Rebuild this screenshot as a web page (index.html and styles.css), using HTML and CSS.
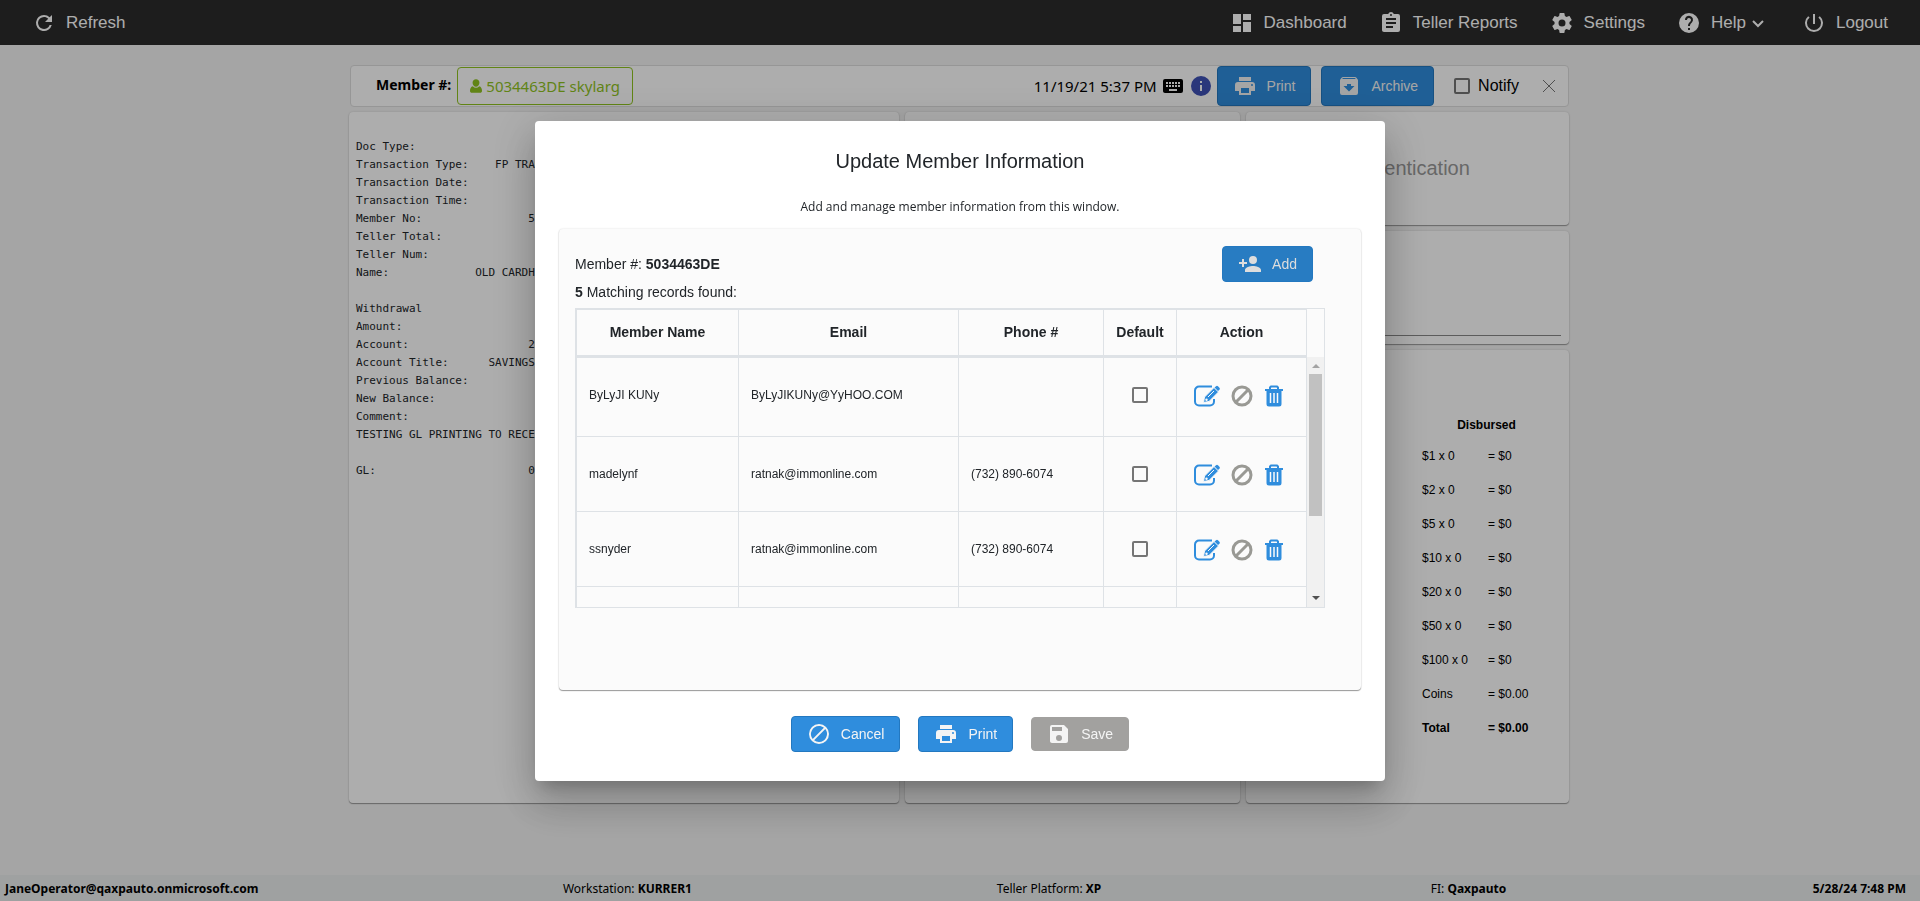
FILE: index.html
```html
<!DOCTYPE html>
<html lang="en">
<head>
    <meta charset="UTF-8">
    <meta name="viewport" content="width=device-width, initial-scale=1.0">
    <title>Update Member Information</title>
    <link rel="stylesheet" href="styles.css">
</head>
<body>

    <!-- Shared icons -->
    <svg class="sprite" aria-hidden="true">
        <symbol id="i-refresh" viewBox="0 0 24 24"><path d="M17.65 6.35A7.96 7.96 0 0 0 12 4a8 8 0 1 0 7.73 10h-2.08A6 6 0 1 1 12 6c1.66 0 3.14.69 4.22 1.78L13 11h7V4z"/></symbol>
        <symbol id="i-dashboard" viewBox="0 0 24 24"><path d="M3 13h8V3H3zm0 8h8v-6H3zm10 0h8V11h-8zm0-18v6h8V3z"/></symbol>
        <symbol id="i-report" viewBox="0 0 24 24"><path d="M19 3h-4.18a3 3 0 0 0-5.64 0H5a2 2 0 0 0-2 2v14c0 1.100.9 2 2 2h14a2 2 0 0 0 2-2V5a2 2 0 0 0-2-2zm-7 0a1 1 0 1 1 0 2 1 1 0 0 1 0-2zm2 14H7v-2h7zm3-4H7v-2h10zm0-4H7V7h10z"/></symbol>
        <symbol id="i-settings" viewBox="0 0 24 24"><path d="M19.43 12.980a7.800 7.800 0 0 0 0-1.960l2.110-1.650a.5.5 0 0 0 .12-.64l-2-3.460a.5.5 0 0 0-.61-.22l-2.490 1a7.300 7.300 0 0 0-1.690-.98l-.38-2.650A.49.49 0 0 0 14 2h-4a.49.49 0 0 0-.49.42l-.38 2.650c-.61.25-1.170.59-1.690.98l-2.490-1a.49.49 0 0 0-.61.22l-2 3.460a.49.49 0 0 0 .12.64l2.110 1.650a7.900 7.900 0 0 0 0 1.960l-2.110 1.650a.5.5 0 0 0-.12.64l2 3.460c.12.22.39.3.61.22l2.490-1c.52.4 1.080.73 1.690.98l.38 2.650c.03.24.24.42.49.42h4c.25 0 .46-.18.49-.42l.38-2.650a7.700 7.700 0 0 0 1.690-.98l2.490 1c.23.09.49 0 .61-.22l2-3.460a.5.5 0 0 0-.12-.64zM12 15.500a3.500 3.500 0 1 1 0-7 3.500 3.500 0 0 1 0 7z"/></symbol>
        <symbol id="i-help" viewBox="0 0 24 24"><path d="M12 2a10 10 0 1 0 0 20 10 10 0 0 0 0-20zm1 17h-2v-2h2zm2.070-7.750-.9.920C13.450 12.900 13 13.500 13 15h-2v-.5c0-1.100.45-2.100 1.170-2.830l1.240-1.260A2 2 0 1 0 10 9H8a4 4 0 1 1 7.070 2.250z"/></symbol>
        <symbol id="i-power" viewBox="0 0 24 24"><path d="M13 3h-2v10h2zm4.830 2.170-1.420 1.420A7 7 0 1 1 7.580 6.580L6.170 5.170a9 9 0 1 0 11.660 0z"/></symbol>
        <symbol id="i-print" viewBox="0 0 24 24"><path d="M19 8H5a3 3 0 0 0-3 3v6h4v4h12v-4h4v-6a3 3 0 0 0-3-3zm-3 11H8v-5h8zm3-7a1 1 0 1 1 0-2 1 1 0 0 1 0 2zm-1-9H6v4h12z"/></symbol>
        <symbol id="i-archive" viewBox="0 0 24 24"><path d="m20.540 5.230-1.390-1.680A1.450 1.450 0 0 0 18 3H6c-.47 0-.88.21-1.160.55L3.460 5.230C3.170 5.570 3 6.020 3 6.500V19a2 2 0 0 0 2 2h14a2 2 0 0 0 2-2V6.500c0-.48-.17-.93-.46-1.270zM12 17.500 6.500 12H10v-2h4v2h3.500zM5.120 5l.81-1h12l.94 1z"/></symbol>
        <symbol id="i-user" viewBox="0 0 14 16"><path d="M7 0a4 4 0 0 1 4 4.300C11 6.600 9.200 9 7 9S3 6.600 3 4.300A4 4 0 0 1 7 0zM3.300 8.200A5 5 0 0 0 7 10a5 5 0 0 0 3.700-1.800C13 8.700 14 11 14 13.500c0 1.500-.9 2.500-2.300 2.500H2.300C.9 16 0 15 0 13.500c0-2.500 1-4.800 3.300-5.300z"/></symbol>
        <symbol id="i-keyboard" viewBox="0 0 24 24"><path d="M20 5H4a2 2 0 0 0-2 2v10c0 1.100.9 2 2 2h16a2 2 0 0 0 2-2V7a2 2 0 0 0-2-2zm-9 3h2v2h-2zm0 3h2v2h-2zM8 8h2v2H8zm0 3h2v2H8zm-1 2H5v-2h2zm0-3H5V8h2zm9 7H8v-2h8zm0-4h-2v-2h2zm0-3h-2V8h2zm3 3h-2v-2h2zm0-3h-2V8h2z"/></symbol>
        <symbol id="i-info" viewBox="0 0 24 24"><path d="M12 2a10 10 0 1 0 0 20 10 10 0 0 0 0-20zm1 15h-2v-6h2zm0-8h-2V7h2z"/></symbol>
        <symbol id="i-add" viewBox="0 0 24 24"><path d="M15 12a4 4 0 1 0 0-8 4 4 0 0 0 0 8zm-9-2V7H4v3H1v2h3v3h2v-3h3v-2zm9 4c-2.670 0-8 1.340-8 4v2h16v-2c0-2.660-5.330-4-8-4z"/></symbol>
        <symbol id="i-cancel" viewBox="0 0 24 24"><path d="M12 2a10 10 0 1 0 0 20 10 10 0 0 0 0-20zm0 2c1.850 0 3.550.63 4.900 1.690L5.690 16.900A8 8 0 0 1 12 4zm0 16a7.900 7.900 0 0 1-4.900-1.690L18.310 7.100A8 8 0 0 1 12 20z"/></symbol>
        <symbol id="i-save" viewBox="0 0 24 24"><path d="M17 3H5a2 2 0 0 0-2 2v14c0 1.100.9 2 2 2h14a2 2 0 0 0 2-2V7zm-5 16a3 3 0 1 1 0-6 3 3 0 0 1 0 6zm3-10H5V5h10z"/></symbol>
        <symbol id="i-edit" viewBox="0 0 26 22"><path fill="none" stroke="currentColor" stroke-width="2" d="M18 1.500H5a4 4 0 0 0-4 4v11a4 4 0 0 0 4 4h11a4 4 0 0 0 4-4V14"/><path stroke="#fafafa" stroke-width="1" d="m9.500 17.500 1-5.500L20 2.500l4.500 4.500L15 16.500z"/><path d="M22 1.200a1.500 1.500 0 0 1 2 0l1.400 1.500a1.500 1.500 0 0 1 0 2L24 6l-3.400-3.500z"/><path stroke="#fafafa" stroke-width="1" d="m14 12 6-6"/><circle cx="12.500" cy="14.800" r="1.200" fill="#fafafa"/></symbol>
        <symbol id="i-ban" viewBox="0 0 22 22"><path fill="none" stroke="currentColor" stroke-width="3" d="M11 2a9 9 0 1 0 0 18 9 9 0 0 0 0-18zM4.800 17.200 17.200 4.800"/></symbol>
        <symbol id="i-trash" viewBox="0 0 20 22"><path fill="none" stroke="currentColor" stroke-width="2" d="M6 5V2.500L7 1.500h6l1 1V5"/><path d="M1 4h18v2h-1.500v13a2.500 2.500 0 0 1-2.500 2.500H5A2.500 2.500 0 0 1 2.500 19V6H1z"/><path stroke="#fafafa" stroke-width="1.500" d="M6.500 8v10M10 8v10M13.500 8v10"/></symbol>
    </svg>

    <div class="page">
        <nav class="topbar">
            <a href="#"><svg class="icon"><use href="#i-refresh"/></svg>Refresh</a>
            <div class="menu">
                <a href="#"><svg class="icon"><use href="#i-dashboard"/></svg>Dashboard</a>
                <a href="#"><svg class="icon"><use href="#i-report"/></svg>Teller Reports</a>
                <a href="#"><svg class="icon"><use href="#i-settings"/></svg>Settings</a>
                <a href="#"><svg class="icon"><use href="#i-help"/></svg>Help<svg class="chevron" viewBox="0 0 12 8"><path d="m1 1 5 5 5-5"/></svg></a>
                <a href="#"><svg class="icon"><use href="#i-power"/></svg>Logout</a>
            </div>
        </nav>

        <main class="content">
            <div class="toolbar">
                <strong>Member #:</strong>
                <button class="chip"><svg><use href="#i-user"/></svg>5034463DE skylarg</button>
                <div class="tools">
                    <span class="date">11/19/21 5:37 PM</span>
                    <svg class="small-icon"><use href="#i-keyboard"/></svg>
                    <svg class="small-icon info"><use href="#i-info"/></svg>
                    <button class="btn tall"><svg class="icon"><use href="#i-print"/></svg>Print</button>
                    <button class="btn tall"><svg class="icon"><use href="#i-archive"/></svg>Archive</button>
                    <label class="notify"><input type="checkbox">Notify</label>
                    <button class="close" aria-label="Close"><svg viewBox="0 0 14 14"><path d="m1 1 12 12M13 1 1 13"/></svg></button>
                </div>
            </div>

            <div class="columns">
                <section class="card">
<pre class="receipt">Doc Type:
Transaction Type:    FP TRANSF
Transaction Date:
Transaction Time:
Member No:                5034
Teller Total:
Teller Num:
Name:             OLD CARDHLDR

Withdrawal
Amount:
Account:                  2
Account Title:      SAVINGS
Previous Balance:
New Balance:
Comment:
TESTING GL PRINTING TO RECEIPT

GL:                       0</pre>
                </section>
                <section class="card"></section>
                <div class="side">
                    <section class="card auth">Authentication</section>
                    <section class="card signature"><div class="line"></div></section>
                    <section class="card cash">
                        <table>
                            <thead><tr><th colspan="2">Disbursed</th></tr></thead>
                            <tbody>
                                <tr><td>$1 x 0</td><td>= $0</td></tr>
                                <tr><td>$2 x 0</td><td>= $0</td></tr>
                                <tr><td>$5 x 0</td><td>= $0</td></tr>
                                <tr><td>$10 x 0</td><td>= $0</td></tr>
                                <tr><td>$20 x 0</td><td>= $0</td></tr>
                                <tr><td>$50 x 0</td><td>= $0</td></tr>
                                <tr><td>$100 x 0</td><td>= $0</td></tr>
                                <tr><td>Coins</td><td>= $0.00</td></tr>
                                <tr class="total"><td>Total</td><td>= $0.00</td></tr>
                            </tbody>
                        </table>
                    </section>
                </div>
            </div>
        </main>

        <footer class="statusbar">
            <strong>JaneOperator@qaxpauto.onmicrosoft.com</strong>
            <span>Workstation: <strong>KURRER1</strong></span>
            <span>Teller Platform: <strong>XP</strong></span>
            <span>FI: <strong>Qaxpauto</strong></span>
            <strong>5/28/24 7:48 PM</strong>
        </footer>
    </div>

    <!-- Member dialog -->
    <div class="backdrop">
        <div class="dialog" role="dialog" aria-labelledby="dialogTitle">
            <h2 id="dialogTitle">Update Member Information</h2>
            <p class="subtitle">Add and manage member information from this window.</p>

            <div class="panel">
                <div class="panel-head">
                    <div>
                        <p>Member #: <strong>5034463DE</strong></p>
                        <p><strong>5</strong> Matching records found:</p>
                    </div>
                    <button class="btn add"><svg class="icon"><use href="#i-add"/></svg>Add</button>
                </div>

                <div class="grid">
                    <div class="grid-rows">
                        <table class="members">
                            <colgroup><col class="c-name"><col class="c-email"><col class="c-phone"><col class="c-default"><col class="c-action"></colgroup>
                            <thead>
                                <tr><th>Member Name</th><th>Email</th><th>Phone #</th><th>Default</th><th>Action</th></tr>
                            </thead>
                            <tbody>
                                <tr class="first">
                                    <td>ByLyJI KUNy</td><td>ByLyJIKUNy@YyHOO.COM</td><td></td>
                                    <td class="center"><input type="checkbox" aria-label="Default"></td>
                                    <td><div class="actions">
                                        <button aria-label="Edit"><svg class="edit"><use href="#i-edit"/></svg></button>
                                        <button aria-label="Block"><svg class="ban"><use href="#i-ban"/></svg></button>
                                        <button aria-label="Delete"><svg class="trash"><use href="#i-trash"/></svg></button>
                                    </div></td>
                                </tr>
                                <tr>
                                    <td>madelynf</td><td>ratnak@immonline.com</td><td>(732) 890-6074</td>
                                    <td class="center"><input type="checkbox" aria-label="Default"></td>
                                    <td><div class="actions">
                                        <button aria-label="Edit"><svg class="edit"><use href="#i-edit"/></svg></button>
                                        <button aria-label="Block"><svg class="ban"><use href="#i-ban"/></svg></button>
                                        <button aria-label="Delete"><svg class="trash"><use href="#i-trash"/></svg></button>
                                    </div></td>
                                </tr>
                                <tr>
                                    <td>ssnyder</td><td>ratnak@immonline.com</td><td>(732) 890-6074</td>
                                    <td class="center"><input type="checkbox" aria-label="Default"></td>
                                    <td><div class="actions">
                                        <button aria-label="Edit"><svg class="edit"><use href="#i-edit"/></svg></button>
                                        <button aria-label="Block"><svg class="ban"><use href="#i-ban"/></svg></button>
                                        <button aria-label="Delete"><svg class="trash"><use href="#i-trash"/></svg></button>
                                    </div></td>
                                </tr>
                                <tr><td></td><td></td><td></td><td></td><td></td></tr>
                            </tbody>
                        </table>
                    </div>
                    <div class="scrollbar">
                        <span class="arrow up"></span>
                        <span class="thumb"></span>
                        <span class="arrow down"></span>
                    </div>
                </div>
            </div>

            <div class="dialog-buttons">
                <button class="btn"><svg class="icon"><use href="#i-cancel"/></svg>Cancel</button>
                <button class="btn"><svg class="icon"><use href="#i-print"/></svg>Print</button>
                <button class="btn save" disabled><svg class="icon"><use href="#i-save"/></svg>Save</button>
            </div>
        </div>
    </div>

</body>
</html>
```
FILE: styles.css
```css
* {
    box-sizing: border-box;
}

body {
    margin: 0;
    font-family: "Liberation Sans", Arial, sans-serif;
    font-size: 14px;
    color: #000;
    background-color: #f3f3f3;
}

button {
    font-family: inherit;
    cursor: pointer;
}

svg {
    fill: currentColor;
    flex: none;
}

.sprite {
    display: none;
}

.icon {
    width: 24px;
    height: 24px;
}

.page {
    display: flex;
    flex-direction: column;
    min-height: 100vh;
}

/* Top bar */
.topbar {
    display: flex;
    justify-content: space-between;
    height: 45px;
    padding: 0 32px;
    background-color: #2c2c2c;
}

.topbar a {
    display: flex;
    align-items: center;
    gap: 10px;
    color: #fff;
    font-size: 17px;
    text-decoration: none;
}

.menu {
    display: flex;
    gap: 32px;
}

.chevron {
    width: 12px;
    height: 8px;
    margin: 2px 6px 0 -4px;
    fill: none;
    stroke: #fff;
    stroke-width: 2;
}

/* Main content */
.content {
    flex: 1;
    width: 1222px;
    max-width: 100%;
    margin: 0 auto;
    padding: 20px 2px 0 0;
}

.toolbar {
    display: flex;
    align-items: center;
    height: 42px;
    margin-left: 1px;
    padding: 0 12px 0 25px;
    background-color: #fff;
    border: 1px solid #ddd;
    border-radius: 4px;
    font-family: "Noto Sans", sans-serif;
    font-size: 15px;
}

.toolbar strong {
    padding-bottom: 4px;
    font-size: 14px;
}

.chip {
    display: flex;
    align-items: center;
    gap: 4px;
    height: 38px;
    margin-left: 6px;
    padding: 0 12px;
    background: none;
    border: 1px solid #8fc31f;
    border-radius: 4px;
    color: #8fc31f;
    font-size: 15px;
}

.chip svg {
    width: 12px;
    height: 14px;
}

.tools {
    display: flex;
    align-items: center;
    margin-left: auto;
}

.small-icon {
    width: 24px;
    height: 24px;
    margin-left: 4px;
}

.info {
    margin-right: 4px;
    color: #3f51b5;
}

.btn {
    display: flex;
    align-items: center;
    gap: 10px;
    height: 36px;
    padding: 0 15px;
    background-color: #2f8ddd;
    border: 1px solid #2378c0;
    border-radius: 4px;
    color: #f4f4f4;
    font-family: "Liberation Sans", Arial, sans-serif;
    font-size: 14px;
}

.btn.tall {
    height: 40px;
    margin-right: 10px;
}

.notify {
    display: flex;
    align-items: center;
    gap: 8px;
    margin: 0 23px 0 10px;
    font-family: "Liberation Sans", Arial, sans-serif;
    font-size: 16px;
}

input[type="checkbox"] {
    appearance: none;
    width: 16px;
    height: 16px;
    margin: 0;
    border: 2px solid #757575;
    border-radius: 2px;
    vertical-align: middle;
}

.close {
    padding: 0;
    background: none;
    border: 0;
}

.close svg {
    display: block;
    width: 14px;
    height: 14px;
    stroke: #757575;
    stroke-width: 1;
}

.columns {
    display: grid;
    grid-template-columns: 550fr 335fr 323fr;
    gap: 6px;
    margin-top: 5px;
}

.card {
    background-color: #fff;
    border-radius: 4px;
    box-shadow: 0 1px 1px #999, 0 0 2px rgba(0, 0, 0, 0.15);
}

.side {
    display: flex;
    flex-direction: column;
    gap: 6px;
}

.receipt {
    margin: 0;
    padding: 26px 7px;
    font-family: "DejaVu Sans Mono", monospace;
    font-size: 11px;
    line-height: 18px;
    color: #212529;
}

.auth {
    display: flex;
    align-items: center;
    justify-content: center;
    height: 113px;
    padding-right: 2px;
    color: #999;
    font-size: 20px;
}

.signature {
    display: flex;
    align-items: flex-end;
    height: 113px;
    padding: 8px;
}

.line {
    flex: 1;
    border-bottom: 1px solid #888;
}

.cash {
    padding: 62px 36px 58px 176px;
    font-size: 12px;
}

.cash table {
    width: 111px;
    border-collapse: collapse;
}

.cash th {
    height: 27px;
    padding: 0 0 2px 18px;
}

.cash td {
    width: 66px;
    height: 34px;
    padding: 0;
    white-space: nowrap;
}

.cash td + td {
    width: 45px;
}

.cash .total {
    font-weight: bold;
}

/* Status bar */
.statusbar {
    display: grid;
    grid-template-columns: 27fr 21fr 21fr 18fr 5fr;
    align-items: center;
    height: 26px;
    padding: 0 14px 0 5px;
    background-color: #ebeeee;
    font-family: "Noto Sans", sans-serif;
    font-size: 12px;
    white-space: nowrap;
}

.statusbar > :last-child {
    justify-self: end;
}

/* Dialog */
.backdrop {
    position: fixed;
    inset: 0;
    display: flex;
    align-items: center;
    justify-content: center;
    background-color: rgba(0, 0, 0, 0.32);
}

.dialog {
    width: 850px;
    padding: 24px;
    background-color: #fff;
    border-radius: 4px;
    box-shadow: 0 11px 15px -7px rgba(0, 0, 0, 0.2), 0 24px 38px 3px rgba(0, 0, 0, 0.14), 0 9px 46px 8px rgba(0, 0, 0, 0.12);
    color: #212529;
}

.dialog h2 {
    margin: 0;
    font-size: 20px;
    font-weight: normal;
    line-height: 32px;
    text-align: center;
}

.subtitle {
    margin: 20px 0 12px;
    font-family: "Open Sans", sans-serif;
    font-size: 12px;
    line-height: 20px;
    text-align: center;
}

.panel {
    min-height: 461px;
    padding: 17px 36px 17px 16px;
    background-color: #fbfbfb;
    border-radius: 4px;
    box-shadow: 0 1px 1px #999, 0 0 2px rgba(0, 0, 0, 0.15);
}

.panel-head {
    display: flex;
    align-items: flex-start;
    justify-content: space-between;
    padding-right: 12px;
}

.panel-head p {
    margin: 0;
    padding-top: 4px;
    line-height: 28px;
}

.panel-head p + p {
    padding: 0 0 2px;
}

.add {
    background-color: #287cc2;
    color: #ddd;
}

.grid {
    display: flex;
    height: 300px;
    border: 1px solid #dee2e6;
}

.grid-rows {
    flex: 1;
    overflow: hidden;
}

.members {
    width: 100%;
    table-layout: fixed;
    border-collapse: separate;
    border-spacing: 0;
    border-top: 1px solid #dee2e6;
    border-left: 1px solid #dee2e6;
    font-size: 12px;
}

.members th {
    height: 48px;
    padding: 0;
    border-right: 1px solid #dee2e6;
    border-bottom: 3px solid #dee2e6;
    font-size: 14px;
}

.members td {
    height: 75px;
    padding: 0 12px;
    border-right: 1px solid #dee2e6;
    border-bottom: 1px solid #dee2e6;
}

.members .first td {
    height: 79px;
    padding-bottom: 4px;
}

.members .center {
    text-align: center;
}

.c-name {
    width: 162px;
}

.c-email {
    width: 220px;
}

.c-phone {
    width: 145px;
}

.c-default {
    width: 73px;
}

.actions {
    display: flex;
    align-items: center;
    justify-content: center;
    padding: 2px 6px 0 0;
}

.actions button {
    padding: 0;
    background: none;
    border: 0;
    color: #2f8ddd;
}

.actions svg {
    display: block;
    height: 22px;
}

.edit {
    width: 26px;
}

.ban {
    width: 22px;
    margin: 0 11px;
    color: #999994;
}

.trash {
    width: 20px;
}

.scrollbar {
    display: flex;
    flex-direction: column;
    align-items: center;
    width: 17px;
    margin-top: 48px;
    padding: 7px 0;
    background-color: #f1f1f1;
}

.thumb {
    width: 13px;
    height: 142px;
    margin: 6px 0 auto;
    background-color: #c1c1c1;
}

.arrow {
    border: 4px solid transparent;
}

.up {
    border-top: 0;
    border-bottom-color: #a3a3a3;
}

.down {
    border-bottom: 0;
    border-top-color: #505050;
}

.dialog-buttons {
    display: flex;
    align-items: center;
    justify-content: center;
    gap: 18px;
    padding: 26px 0 5px;
}

.save {
    height: 34px;
    background-color: #a2a19f;
    border-color: #a2a19f;
}
```
